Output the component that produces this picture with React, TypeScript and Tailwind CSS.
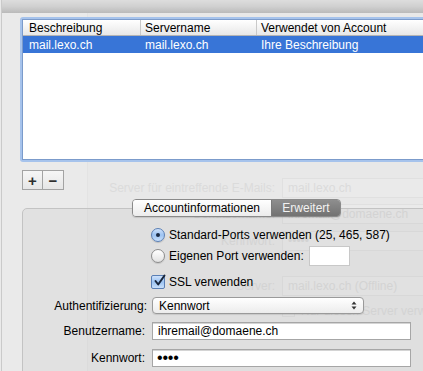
import React from "react";

function Radio({ on }: { on?: boolean }) {
    return on ? (
        <span className="flex h-[14px] w-[14px] shrink-0 items-center justify-center rounded-full border border-[#5a7fb5] bg-gradient-to-b from-[#cfe2fb] via-[#9cc3f2] to-[#c9e0fb] shadow-[0_1px_1px_rgba(0,0,0,0.15)]">
            <span className="h-[4px] w-[4px] rounded-full bg-[#1b2b44]" />
        </span>
    ) : (
        <span className="h-[14px] w-[14px] shrink-0 rounded-full border border-[#8c8c8c] bg-gradient-to-b from-[#ffffff] via-[#f1f1f1] to-[#e2e2e2] shadow-[0_1px_1px_rgba(0,0,0,0.12)]" />
    );
}

function Check() {
    return (
        <span className="relative flex h-[14px] w-[14px] shrink-0 items-center justify-center rounded-[2px] border border-[#5a7fb5] bg-gradient-to-b from-[#cfe2fb] via-[#9cc3f2] to-[#c9e0fb]">
            <svg width="13" height="13" viewBox="0 0 13 13" className="absolute -top-[2px] left-[1px]">
                <path d="M2.5 7 L5.2 10.5 L11.5 1.5" fill="none" stroke="#18263c" strokeWidth="2" strokeLinecap="round" strokeLinejoin="round" />
            </svg>
        </span>
    );
}

function Ghost({ label, value }: { label?: string; value?: string }) {
    return (
        <div className="flex items-center whitespace-nowrap">
            <span className="w-[187px] shrink-0 text-right">{label}</span>
            <span className="ml-[7px] flex h-[20px] w-[150px] shrink-0 items-center border border-[#e0e0e0] bg-[#eaeaea] pl-[5px]">{value}</span>
        </div>
    );
}

export default function App() {
    return (
        <div className="relative h-[371px] w-[423px] overflow-hidden bg-[#e8e8e8] font-['Liberation_Sans',Arial,sans-serif] text-[12px] leading-none text-black">
            {/* window behind the sheet */}
            <div className="flex h-full">
                <div className="h-full w-[88px] shrink-0 border-r border-[#e3e3e3] bg-[#eaeaea]" />
                <div className="flex shrink-0 flex-col pt-[178px] text-[#dbdbdb]">
                    <Ghost label="Server für eintreffende E-Mails:" value="mail.lexo.ch" />
                    <div className="mt-[6px]">
                        <Ghost label="Benutzername:" value="ihremail@domaene.ch" />
                    </div>
                    <div className="mt-[7px]">
                        <Ghost label="Kennwort:" value="•••••" />
                    </div>
                    <div className="mt-[25px]">
                        <Ghost label="Server:" value="mail.lexo.ch (Offline)" />
                    </div>
                    <div className="mt-[8px] flex items-center whitespace-nowrap pl-[194px]">
                        <span className="h-[13px] w-[13px] border border-[#dedede]" />
                        <span className="ml-[6px]">Nur diesen Server verwenden</span>
                    </div>
                </div>
            </div>

            {/* sheet */}
            <div className="absolute inset-y-0 left-[1px] right-0 border-l border-[#cacaca]">
                <div className="h-[13px] bg-gradient-to-b from-[#dddddd] via-[#d0d0d0] to-[#bababa]" />

                <div className="ml-[18px] mt-[4px] w-[420px] rounded-[3px] bg-[#a6c3ec] p-[2px]">
                    <div className="h-[141px] border border-[#7b9bcb] bg-white">
                        <div className="flex h-[16px] items-center border-b border-[#b4b4b4] bg-gradient-to-b from-white to-[#e8e8e8]">
                            <span className="flex h-full w-[118px] items-center border-r border-[#c9c9c9] pl-[6px]">Beschreibung</span>
                            <span className="flex h-full w-[116px] items-center border-r border-[#c9c9c9] pl-[4px]">Servername</span>
                            <span className="pl-[4px]">Verwendet von Account</span>
                        </div>
                        <div className="flex h-[17px] items-center bg-[#3875d7] text-white">
                            <span className="w-[118px] pl-[6px]">mail.lexo.ch</span>
                            <span className="w-[116px] pl-[4px]">mail.lexo.ch</span>
                            <span className="pl-[4px]">Ihre Beschreibung</span>
                        </div>
                    </div>
                </div>

                <div className="ml-[20px] mt-[8px] flex h-[20px] w-[42px] border border-[#a3a3a3] bg-gradient-to-b from-[#f6f6f6] to-[#e6e6e6] text-[15px] font-bold text-[#2e2e2e]">
                    <span className="flex w-[20px] items-center justify-center border-r border-[#a3a3a3]">+</span>
                    <span className="flex flex-1 items-center justify-center">−</span>
                </div>

                <div className="relative z-10 ml-[130px] mt-[9px] flex h-[18px] w-[209px] overflow-hidden rounded-[4px] border border-[#8a8a8a] shadow-[0_1px_1px_rgba(0,0,0,0.12)]">
                    <span className="flex w-[139px] items-center justify-center border-r border-[#7a7a7a] bg-gradient-to-b from-white to-[#ececec]">Accountinformationen</span>
                    <span className="flex flex-1 items-center justify-center bg-gradient-to-b from-[#8e8e8e] to-[#727272] text-[#f2f2f2]">Erweitert</span>
                </div>

                <div className="-mt-[9px] ml-[20px] h-[200px] w-[420px] rounded-[5px] border border-[#c3c3c3] bg-[rgba(0,0,0,0.035)] pt-[19px]">
                    <div className="pl-[128px]">
                        <div className="flex h-[14px] items-center gap-[4px] whitespace-nowrap">
                            <Radio on />
                            <span>Standard-Ports verwenden (25, 465, 587)</span>
                        </div>
                        <div className="mt-[4px] flex h-[20px] items-center gap-[4px] whitespace-nowrap">
                            <Radio />
                            <span>Eigenen Port verwenden:</span>
                            <span className="ml-[1px] h-[20px] w-[41px] border border-[#c8c8c8] bg-white" />
                        </div>
                        <div className="mt-[9px] flex h-[14px] items-center gap-[4px] whitespace-nowrap">
                            <Check />
                            <span>SSL verwenden</span>
                        </div>
                    </div>

                    <div className="mt-[8px] flex items-center">
                        <span className="w-[124px] text-right">Authentifizierung:</span>
                        <span className="ml-[5px] flex h-[17px] w-[212px] items-center justify-between rounded-[4px] border border-[#9a9a9a] bg-gradient-to-b from-white to-[#ececec] pl-[6px] pr-[6px] shadow-[0_1px_1px_rgba(0,0,0,0.1)]">
                            Kennwort
                            <svg width="6" height="9" viewBox="0 0 6 9">
                                <path d="M0.5 3.5 L3 0.5 L5.5 3.5 Z" fill="#333" />
                                <path d="M0.5 5.5 L3 8.5 L5.5 5.5 Z" fill="#333" />
                            </svg>
                        </span>
                    </div>
                    <div className="mt-[8px] flex items-center">
                        <span className="w-[122px] text-right">Benutzername:</span>
                        <span className="ml-[7px] flex h-[18px] w-[259px] items-center border border-[#a6a6a6] bg-white pl-[5px] shadow-[inset_0_1px_0_#d4d4d4]">ihremail@domaene.ch</span>
                    </div>
                    <div className="mt-[9px] flex items-center">
                        <span className="w-[122px] text-right">Kennwort:</span>
                        <span className="ml-[7px] flex h-[18px] w-[259px] items-center border border-[#a6a6a6] bg-white pl-[4px] text-[16px] tracking-[-0.2px] shadow-[inset_0_1px_0_#d4d4d4]">••••</span>
                    </div>
                </div>
            </div>
        </div>
    );
}
